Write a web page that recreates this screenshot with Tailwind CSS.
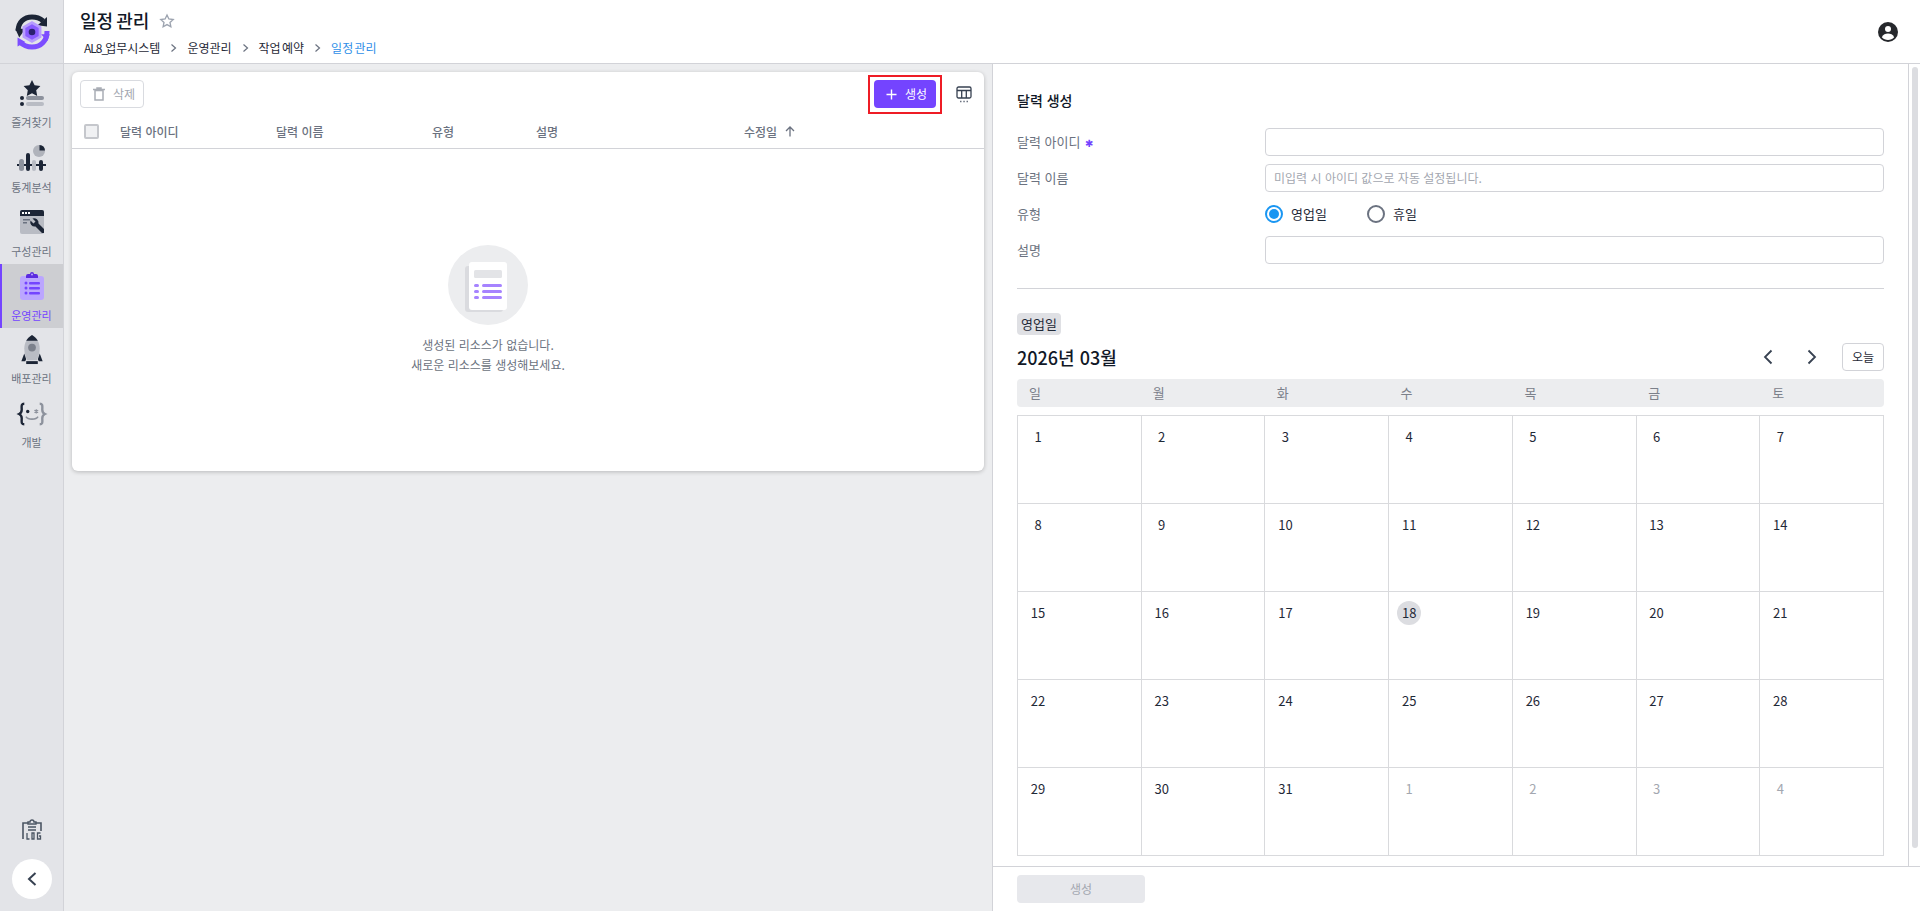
<!DOCTYPE html>
<html lang="ko">
<head>
    <meta charset="UTF-8">
    <title>일정 관리</title>
    <script src="https://cdn.jsdelivr.net/npm/@tailwindcss/browser@4"></script>
</head>
<body class="h-[911px] overflow-hidden bg-[#ecedef] text-[12px] text-[#1f2937] font-['Noto_Sans_CJK_KR','Noto_Sans',sans-serif]">
<div class="flex h-[911px]">
    <!-- Sidebar -->
    <aside class="w-16 h-full shrink-0 flex flex-col bg-[#e3e4e8] border-r border-[#d2d3d8] text-[11px]">
        <div class="h-16 shrink-0 flex items-center justify-center border-b border-[#d2d3d8]">
            <svg width="40" height="40" viewBox="0 0 36 36" fill="none">
                <path d="M5.500 17 C5.500 9 11 4.500 18 4.500 C22 4.500 25 5.500 28 8" stroke="#1c2536" stroke-width="4.500"/>
                <path d="M31.500 4.500 L31.500 13 L23 12 Z" fill="#1c2536"/>
                <path d="M3 15 L12 15 L6.500 23 Z" fill="#1c2536"/>
                <path d="M31.500 17 C31.500 26 26 31.500 18 31.500 C13 31.500 10 30 7 27" stroke="#7c4dff" stroke-width="4.500"/>
                <path d="M5 23 L5 31 L12 27 Z" fill="#7c4dff"/>
                <path d="M26 20 L34 20 L32 26 Z" fill="#7c4dff"/>
                <path d="M18 8 L26.500 13 L26.500 23 L18 28 L9.500 23 L9.500 13 Z" fill="#b79cff"/>
                <path d="M18 11 L24 14.500 L24 21.500 L18 25 L12 21.500 L12 14.500 Z" fill="#8a5cff"/>
                <circle cx="18" cy="18" r="3" fill="#2b2170"/>
            </svg>
        </div>
        <nav class="pt-2 flex flex-col">
            <a class="h-16 flex flex-col items-center text-[#6b7280]">
                <svg class="mt-[8px]" width="24" height="27" viewBox="0 0 24 27">
                    <path d="M12 0 L14.600 5.300 L20.400 6.100 L16.200 10.200 L17.200 16 L12 13.300 L6.800 16 L7.800 10.200 L3.600 6.100 L9.400 5.300 Z" fill="#1c2536"/>
                    <circle cx="2" cy="18" r="2" fill="#1c2536"/><circle cx="2" cy="24" r="2" fill="#1c2536"/>
                    <rect x="6" y="16" width="18" height="4" rx="2" fill="#8d929d"/><rect x="6" y="22" width="18" height="4" rx="2" fill="#b9bcc4"/>
                </svg>
                <span class="leading-4 mt-[7px] whitespace-nowrap">즐겨찾기</span>
            </a>
            <a class="h-16 flex flex-col items-center text-[#6b7280]">
                <svg class="mt-[9px]" width="30" height="28" viewBox="0 0 30 28">
                    <circle cx="22" cy="6" r="6" fill="#b0b3bb"/>
                    <path d="M22.500 0 A6 6 0 0 1 28 5.500 L22.500 5.500 Z" fill="#1c2536"/>
                    <rect x="0" y="19" width="29" height="2" fill="#1c2536"/>
                    <rect x="2" y="14" width="5" height="12" rx="2.500" fill="#8d929d"/>
                    <rect x="9" y="8" width="4" height="18" rx="2" fill="#1c2536"/>
                    <rect x="15" y="15" width="4" height="11" rx="2" fill="#b9bcc4"/>
                    <rect x="22" y="15" width="4" height="11" rx="2" fill="#1c2536"/>
                </svg>
                <span class="leading-4 mt-[6px] whitespace-nowrap">통계분석</span>
            </a>
            <a class="h-16 flex flex-col items-center text-[#6b7280]">
                <svg class="mt-[10px]" width="24" height="24" viewBox="0 0 24 24">
                    <rect width="24" height="24" rx="2" fill="#b9bcc4"/>
                    <path d="M2 0 H22 A2 2 0 0 1 24 2 V6 H0 V2 A2 2 0 0 1 2 0 Z" fill="#1c2536"/>
                    <rect x="2" y="2" width="2" height="2" fill="#fff"/><rect x="5" y="2" width="2" height="2" fill="#fff"/><rect x="8" y="2" width="2" height="2" fill="#fff"/>
                    <rect x="3" y="9" width="7" height="1.500" fill="#6b7280"/><rect x="3" y="12" width="4" height="1.500" fill="#6b7280"/>
                    <path d="M22 23 L15.500 16.500 A4.500 4.500 0 0 1 10.500 10.500 L13.500 13.500 L15.500 11.500 L12.500 8.500 A4.500 4.500 0 0 1 18.500 13.500 L24 19 V23 Z" fill="#1c2536"/>
                </svg>
                <span class="leading-4 mt-[9px] whitespace-nowrap">구성관리</span>
            </a>
            <a class="h-16 flex flex-col items-center bg-[#cdced2] border-l-2 border-[#7444ff] text-[#7444ff] pr-[2px]">
                <svg class="mt-[8px]" width="24" height="28" viewBox="0 0 24 28">
                    <rect y="4" width="24" height="24" rx="3" fill="#bba6ff"/>
                    <path d="M6 4 A2 2 0 0 1 8 2 H10 A2 2 0 0 1 14 2 H16 A2 2 0 0 1 18 4 V6 H6 Z" fill="#5b2be0"/>
                    <circle cx="12" cy="2.500" r="1" fill="#bba6ff"/>
                    <g fill="#7444ff">
                        <circle cx="6" cy="11" r="1.500"/><circle cx="6" cy="16" r="1.500"/><circle cx="6" cy="21" r="1.500"/>
                        <rect x="9" y="10" width="11" height="2.500" rx="1"/><rect x="9" y="15" width="11" height="2.500" rx="1"/><rect x="9" y="20" width="11" height="2.500" rx="1"/>
                    </g>
                </svg>
                <span class="leading-4 mt-[7px] whitespace-nowrap">운영관리</span>
            </a>
            <a class="h-16 flex flex-col items-center text-[#6b7280]">
                <svg class="mt-[7px]" width="24" height="30" viewBox="0 0 24 31">
                    <path d="M12 0 C17 3 20 8 20 14 C20 20 18 24 17 26 H7 C6 24 4 20 4 14 C4 8 7 3 12 0 Z" fill="#b9bcc4"/>
                    <path d="M12 0 C14.500 1.500 16.500 3.500 18 6 H6 C7.500 3.500 9.500 1.500 12 0 Z" fill="#1c2536"/>
                    <circle cx="12" cy="13" r="4" fill="#7c818c"/>
                    <path d="M4 19 L1 27 H5 L6 25 Z M20 19 L23 27 H19 L18 25 Z" fill="#1c2536"/>
                    <rect x="6" y="27" width="12" height="3" fill="#1c2536"/>
                </svg>
                <span class="leading-4 mt-[5px] whitespace-nowrap">배포관리</span>
            </a>
            <a class="h-16 flex flex-col items-center text-[#6b7280]">
                <svg class="mt-[10px]" width="32" height="24" viewBox="0 0 34 28" fill="none">
                    <path d="M8 2 C4 2 5 5 5 9 C5 12 4 13 2 14 C4 15 5 16 5 19 C5 23 4 26 8 26" stroke="#1c2536" stroke-width="2.800"/>
                    <path d="M26 2 C30 2 29 5 29 9 C29 12 30 13 32 14 C30 15 29 16 29 19 C29 23 30 26 26 26" stroke="#8d929d" stroke-width="2.800"/>
                    <circle cx="12" cy="11" r="2" fill="#1c2536"/>
                    <path d="M22 8.500 V13.500 M19.800 9.700 L24.200 12.300 M24.200 9.700 L19.800 12.300" stroke="#8d929d" stroke-width="1.400"/>
                    <path d="M10 17 C12 21 22 21 24 17" stroke="#8d929d" stroke-width="1.800"/>
                </svg>
                <span class="leading-4 mt-[8px]">개발</span>
            </a>
        </nav>
        <div class="mt-auto flex flex-col items-center pb-3">
            <svg width="20" height="22" viewBox="0 0 20 22" fill="none">
                <path d="M1 20 V4 H6 M14 4 H19 V12" stroke="#4b5563" stroke-width="1.600"/>
                <path d="M6 5 V3 H8 A2 2 0 0 1 12 3 H14 V5 Z" stroke="#4b5563" stroke-width="1.400"/>
                <path d="M6 8 H14 M6 11 H14" stroke="#4b5563" stroke-width="1.400"/>
                <path d="M5 14 V20 H7.500 M10 14 H12 V20 H10 Z M18.500 14 H15.500 V20 H18.500 V17 H17" stroke="#4b5563" stroke-width="1.300"/>
            </svg>
            <button class="mt-[18px] w-10 h-10 rounded-full bg-white flex items-center justify-center">
                <svg width="12" height="16" viewBox="0 0 12 16" fill="none"><path d="M9.500 2 L3 8 L9.500 14" stroke="#374151" stroke-width="2"/></svg>
            </button>
        </div>
    </aside>

    <div class="flex-1 min-w-0 flex flex-col">
        <!-- Header -->
        <header class="h-16 shrink-0 bg-white border-b border-[#d2d3d8] flex items-start justify-between pl-4">
            <div>
                <div class="flex items-center h-[27px] mt-[7px] gap-[10px]">
                    <h1 class="text-[18px] font-medium leading-[27px] text-[#111827] [word-spacing:-2px]">일정 관리</h1>
                    <svg width="16" height="16" viewBox="0 0 24 24" fill="none" stroke="#9ca3af" stroke-width="2"><path d="M12 3 L14.800 9 L21.300 9.800 L16.500 14.200 L17.800 20.700 L12 17.400 L6.200 20.700 L7.500 14.200 L2.700 9.800 L9.200 9 Z"/></svg>
                </div>
                <div class="flex items-center h-5 mt-[4px] pl-[4px] text-[#1f2937] [word-spacing:-2px]">
                    <span><span class="tracking-[-1px]">AL8_</span><span class="ml-[-2px]">업무시스템</span></span>
                    <svg class="mx-[10px]" width="7" height="10" viewBox="0 0 7 10" fill="none"><path d="M1.500 1.500 L5.500 5 L1.500 8.500" stroke="#6b7280" stroke-width="1.200"/></svg>
                    <span>운영관리</span>
                    <svg class="mx-[10px]" width="7" height="10" viewBox="0 0 7 10" fill="none"><path d="M1.500 1.500 L5.500 5 L1.500 8.500" stroke="#6b7280" stroke-width="1.200"/></svg>
                    <span>작업 예약</span>
                    <svg class="mx-[10px]" width="7" height="10" viewBox="0 0 7 10" fill="none"><path d="M1.500 1.500 L5.500 5 L1.500 8.500" stroke="#6b7280" stroke-width="1.200"/></svg>
                    <span class="text-[#2f8fe8]">일정 관리</span>
                </div>
            </div>
            <svg class="mt-[22px] mr-[22px]" width="20" height="20" viewBox="0 0 20 20">
                <circle cx="10" cy="10" r="10" fill="#26282c"/>
                <circle cx="10" cy="7" r="3" fill="#fff"/>
                <path d="M3.800 15.200 C5 12.500 7.500 11.600 10 11.600 C12.500 11.600 15 12.500 16.200 15.200 C14.500 17 12.400 18 10 18 C7.600 18 5.500 17 3.800 15.200 Z" fill="#fff"/>
            </svg>
        </header>

        <div class="flex-1 min-h-0 flex">
            <!-- Left list -->
            <main class="w-[928px] shrink-0 p-2">
                <section class="h-[399px] bg-white rounded-md shadow-[0_1px_4px_rgba(0,0,0,0.22)] flex flex-col">
                    <div class="h-[36px] shrink-0 flex items-center justify-between pl-2 pt-2">
                        <button class="w-16 h-7 rounded border border-[#d9dbe0] flex items-center pl-3 gap-2 text-[#a3a7b0]">
                            <svg width="12" height="14" viewBox="0 0 12 14" fill="none" stroke="#a9adb5" stroke-width="1.500"><path d="M0 2.500 H12 M4 2.500 V1 H8 V2.500"/><rect x="2" y="3.500" width="8" height="9.500"/></svg>
                            <span>삭제</span>
                        </button>
                        <div class="flex items-center">
                            <div class="w-[74px] h-[39px] border-2 border-[#ee1c25] flex items-center justify-center">
                                <button class="w-[62px] h-7 rounded bg-[#7444ff] text-white flex items-center pl-3 gap-2">
                                    <svg width="11" height="11" viewBox="0 0 11 11" stroke="#fff" stroke-width="1.400"><path d="M5.500 0.500 V10.500 M0.500 5.500 H10.500"/></svg>
                                    <span>생성</span>
                                </button>
                            </div>
                            <svg class="ml-[14px] mr-[12px]" width="16" height="17" viewBox="0 0 16 17" fill="none" stroke="#374151" stroke-width="1.300">
                                <rect x="1" y="1" width="14" height="11" rx="1.500"/><path d="M1 4.500 H15 M5.700 4.500 V12 M10.300 4.500 V12"/>
                                <path d="M4 15.500 H5.500 M7.300 15.500 H8.800 M10.500 15.500 H12" stroke="#6b7280"/>
                            </svg>
                        </div>
                    </div>
                    <div class="h-10 shrink-0 mt-[1px] pt-[6px] border-b border-[#d2d3d8] flex items-center text-[#6b7280] font-medium">
                        <span class="w-[15px] h-[15px] ml-3 mr-[21px] rounded-[2px] border-2 border-[#c5c7cc] bg-[#f0f1f3]"></span>
                        <span class="w-[156px]">달력 아이디</span>
                        <span class="w-[156px]">달력 이름</span>
                        <span class="w-[104px]">유형</span>
                        <span class="w-[208px]">설명</span>
                        <span class="flex items-center gap-2">수정일
                            <svg width="10" height="11" viewBox="0 0 10 11" fill="none" stroke="#6b7280" stroke-width="1.300"><path d="M5 10.500 V1 M1 5 L5 1 L9 5"/></svg>
                        </span>
                    </div>
                    <div class="w-[832px] flex-1 flex flex-col items-center pt-[96px] text-[#6b7280] leading-5">
                        <div class="w-20 h-20 rounded-full bg-[#ecedef] flex items-center justify-center mb-[10px]">
                            <svg class="mt-[4px]" width="46" height="50" viewBox="0 0 46 50">
                                <rect x="0" y="4" width="38" height="46" rx="3" fill="#dadbdf"/>
                                <rect x="4" y="0" width="38" height="48" rx="3" fill="#fff"/>
                                <rect x="9" y="8" width="28" height="8" rx="1.500" fill="#e3e4e7"/>
                                <g fill="#a683ff">
                                    <rect x="9" y="22" width="5" height="3" rx="1.500"/><rect x="17" y="22" width="20" height="3" rx="1.500"/>
                                    <rect x="9" y="28" width="5" height="3" rx="1.500"/><rect x="17" y="28" width="20" height="3" rx="1.500"/>
                                    <rect x="9" y="34" width="5" height="3" rx="1.500"/><rect x="17" y="34" width="20" height="3" rx="1.500"/>
                                </g>
                            </svg>
                        </div>
                        <p>생성된 리소스가 없습니다.</p>
                        <p>새로운 리소스를 생성해보세요.</p>
                    </div>
                </section>
            </main>

            <!-- Right form -->
            <section class="flex-1 min-w-0 bg-white border-l border-[#d2d3d8] flex flex-col">
                <div class="flex-1 min-h-0 flex">
                    <div class="w-[915px] shrink-0 px-6 pt-[24px]">
                        <h2 class="text-[14px] font-medium leading-6 text-[#111827]">달력 생성</h2>
                        <div class="mt-[12px] flex flex-col text-[13px] text-[#6b7280]">
                            <div class="h-9 flex items-center">
                                <span class="w-[248px] shrink-0">달력 아이디 <span class="text-[#7444ff] text-[10px] ml-[1px]">✱</span></span>
                                <div class="h-7 flex-1 rounded border border-[#d2d3d8]"></div>
                            </div>
                            <div class="h-9 flex items-center">
                                <span class="w-[248px] shrink-0">달력 이름</span>
                                <div class="h-7 flex-1 rounded border border-[#d2d3d8] flex items-center pl-2 text-[12px] text-[#a3a7b0]">미입력 시 아이디 값으로 자동 설정됩니다.</div>
                            </div>
                            <div class="h-9 flex items-center">
                                <span class="w-[248px] shrink-0">유형</span>
                                <div class="flex items-center text-[#1f2937]">
                                    <span class="w-[18px] h-[18px] rounded-full border-2 border-[#1a96f2] flex items-center justify-center"><span class="w-[10px] h-[10px] rounded-full bg-[#1a96f2]"></span></span>
                                    <span class="ml-2 w-[76px]">영업일</span>
                                    <span class="w-[18px] h-[18px] rounded-full border-2 border-[#6b7280]"></span>
                                    <span class="ml-2">휴일</span>
                                </div>
                            </div>
                            <div class="h-9 flex items-center">
                                <span class="w-[248px] shrink-0">설명</span>
                                <div class="h-7 flex-1 rounded border border-[#d2d3d8]"></div>
                            </div>
                        </div>
                        <hr class="mt-[20px] border-[#d2d3d8]">
                        <span class="inline-block mt-[24px] h-[22px] leading-[22px] px-1 rounded bg-[#dfe0e4] text-[13px] text-[#1f2937] align-top">영업일</span>
                        <div class="h-[44px] flex items-center justify-between">
                            <h3 class="text-[18px] font-medium text-[#111827]">2026년 03월</h3>
                            <div class="flex items-center">
                                <svg width="10" height="16" viewBox="0 0 10 16" fill="none" stroke="#374151" stroke-width="1.800"><path d="M8.500 1.500 L2 8 L8.500 14.500"/></svg>
                                <svg class="ml-[34px]" width="10" height="16" viewBox="0 0 10 16" fill="none" stroke="#374151" stroke-width="1.800"><path d="M1.500 1.500 L8 8 L1.500 14.500"/></svg>
                                <button class="ml-[25px] w-[42px] h-7 rounded border border-[#d2d3d8] text-[#1f2937]">오늘</button>
                            </div>
                        </div>
                        <div class="h-7 rounded bg-[#ecedef] grid grid-cols-7 text-[13px] text-[#7b808a] items-center">
                            <span class="pl-3">일</span><span class="pl-3">월</span><span class="pl-3">화</span><span class="pl-3">수</span><span class="pl-3">목</span><span class="pl-3">금</span><span class="pl-3">토</span>
                        </div>
                        <div id="cal" class="mt-2 grid grid-cols-7 border-t border-l border-[#d9dadd] text-[13px]"></div>
                    </div>
                    <div class="flex-1 border-l border-[#d2d3d8] flex justify-center pt-[3px] pb-[18px]">
                        <div class="w-[6px] rounded-full bg-[#dcdde1]"></div>
                    </div>
                </div>
                <div class="h-[45px] shrink-0 border-t border-[#d2d3d8] pl-6 pt-2">
                    <button class="w-32 h-7 rounded bg-[#e7e8ec] text-[#a3a7b0]">생성</button>
                </div>
            </section>
        </div>
    </div>
</div>
<script>
    // March 2026 grid, trailing days belong to April
    const days = [];
    for (let d = 1; d <= 31; d++) days.push({ d: d, muted: false });
    for (let d = 1; d <= 4; d++) days.push({ d: d, muted: true });

    const cal = document.getElementById("cal");
    days.forEach(function (item) {
        const today = !item.muted && item.d === 18;
        const color = item.muted ? "text-[#a3a7b0]" : "text-[#1f2937]";
        const bg = today ? "bg-[#dcdde1]" : "";
        cal.innerHTML += `
            <div class="h-[88px] border-r border-b border-[#d9dadd] pt-[9px] pl-2">
                <span class="w-6 h-6 rounded-full flex items-center justify-center ${color} ${bg}">${item.d}</span>
            </div>`;
    });
</script>
</body>
</html>
